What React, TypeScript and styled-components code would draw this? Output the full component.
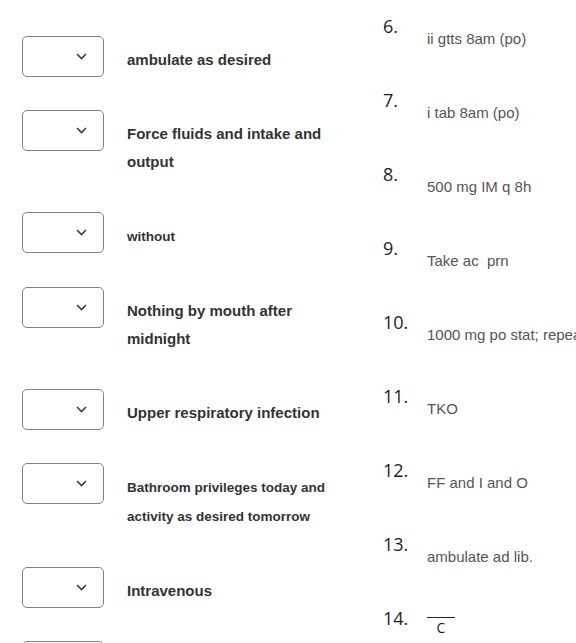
import styled, { createGlobalStyle } from "styled-components";

const GlobalStyle = createGlobalStyle`
  html, body {
    margin: 0;
    padding: 0;
    background: #ffffff;
    overflow: hidden;
    font-family: "Liberation Sans", Arial, sans-serif;
  }
`;

type Term = { text: string[]; small?: boolean };

const terms: Term[] = [
  { text: ["ambulate as desired"] },
  { text: ["Force fluids and intake and", "output"] },
  { text: ["without"], small: true },
  { text: ["Nothing by mouth after", "midnight"] },
  { text: ["Upper respiratory infection"] },
  { text: ["Bathroom privileges today and", "activity as desired tomorrow"], small: true },
  { text: ["Intravenous"] },
  { text: [""] },
];

const abbreviations = [
  "ii gtts 8am (po)",
  "i tab 8am (po)",
  "500 mg IM q 8h",
  "Take ac  prn",
  "1000 mg po stat; repeat in 4 h",
  "TKO",
  "FF and I and O",
  "ambulate ad lib.",
];

export default function App() {
  return (
    <>
      <GlobalStyle />
      <Page>
        <LeftColumn>
          {terms.map((t, k) => (
            <MatchRow key={k}>
              <Select>
                <svg width="11" height="7" viewBox="0 0 11 7">
                  <path d="M1 1l4.5 4.5L10 1" fill="none" stroke="#3c3c3c" strokeWidth="1.6" />
                </svg>
              </Select>
              <Label $small={t.small}>
                {t.text.map((line, i) => (
                  <div key={i}>{line}</div>
                ))}
              </Label>
            </MatchRow>
          ))}
        </LeftColumn>
        <RightColumn>
          {abbreviations.map((a, k) => (
            <NumRow key={k}>
              <Num>{k + 6}.</Num>
              <Abbr>{a}</Abbr>
            </NumRow>
          ))}
          <NumRow>
            <Num>14.</Num>
            <Barred>c</Barred>
          </NumRow>
        </RightColumn>
      </Page>
    </>
  );
}

const Page = styled.div`
  display: flex;
  align-items: flex-start;
  padding: 19px 0 0 22px;
  width: 900px;
`;

const LeftColumn = styled.div`
  width: 361px;
  flex-shrink: 0;
  padding-top: 17px;
`;

const MatchRow = styled.div`
  display: flex;
  align-items: flex-start;
  gap: 23px;
`;

const Select = styled.div`
  box-sizing: border-box;
  width: 82px;
  height: 41px;
  flex-shrink: 0;
  border: 1px solid #808080;
  border-radius: 5px;
  display: flex;
  align-items: center;
  justify-content: flex-end;
  padding-right: 16px;
`;

const Label = styled.div<{ $small?: boolean }>`
  padding: 10px 0 36px;
  font-weight: 700;
  color: #333333;
  font-size: ${(p) => (p.$small ? "13.5px" : "15px")};
  line-height: ${(p) => (p.$small ? "29px" : "28px")};
`;

const RightColumn = styled.div`
  display: flex;
  flex-direction: column;
`;

const NumRow = styled.div`
  display: flex;
  align-items: flex-start;
  height: 74px;
`;

const Num = styled.div`
  width: 44px;
  flex-shrink: 0;
  margin-top: -3px;
  font-family: "Open Sans", "Liberation Sans", sans-serif;
  font-weight: 500;
  font-size: 18px;
  line-height: 20px;
  color: #1e1e1e;
`;

const Abbr = styled.div`
  padding-top: 11px;
  font-size: 15px;
  line-height: 18px;
  color: #555555;
  white-space: pre;
`;

const Barred = styled.div`
  margin-top: 6px;
  width: 28px;
  border-top: 1px solid #222222;
  text-align: center;
  padding-top: 2px;
  font-family: "Open Sans", "Liberation Sans", sans-serif;
  font-size: 14px;
  line-height: 15px;
  color: #1a1a1a;
  text-transform: uppercase;
`;
